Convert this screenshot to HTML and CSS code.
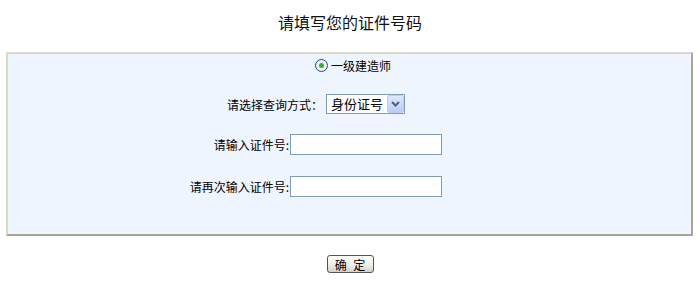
FILE: index.html
```html
<!DOCTYPE html>
<html lang="zh-CN">
<head>
<meta charset="utf-8">
<title>请填写您的证件号码</title>
<link rel="stylesheet" href="styles.css">
</head>
<body>
<div class="title">请填写您的证件号码</div>
<div class="panel">
  <div class="radio-row">
    <label class="radio-label"><input type="radio" name="kind" class="radio" checked><span>一级建造师</span></label>
  </div>
  <div class="row row-select">
    <span class="label">请选择查询方式：</span>
    <span class="select-wrap">
      <select class="select"><option>身份证号</option></select>
      <span class="select-btn"><svg width="9" height="6" viewBox="0 0 9 6"><path d="M1 1 L4.5 4.5 L8 1" fill="none" stroke="#4d6185" stroke-width="2"/></svg></span>
    </span>
  </div>
  <div class="row row-input">
    <span class="label">请输入证件号:</span>
    <input type="text" class="text">
  </div>
  <div class="row row-input row-last">
    <span class="label">请再次输入证件号:</span>
    <input type="text" class="text">
  </div>
</div>
<div class="actions">
  <button class="btn" type="button">确 定</button>
</div>
</body>
</html>
```
FILE: styles.css
```css
html, body {
  margin: 0;
  padding: 0;
  background: #ffffff;
  font-family: "Noto Sans CJK SC", "Liberation Sans", sans-serif;
  font-size: 12px;
  color: #000;
}
.title {
  height: 52px;
  line-height: 44px;
  text-align: center;
  font-size: 16px;
  color: #111;
}
.panel {
  margin: 0 7px 0 6px;
  background: #eef5fe;
  border-style: solid;
  border-width: 2px;
  border-color: #dcd8c8 #a8a78f #a8a78f #dcd8c8;
  padding-bottom: 38px;
}
.radio-row {
  height: 22px;
  display: flex;
  align-items: center;
  padding-left: 307px;
}
.radio-label {
  display: flex;
  align-items: center;
  gap: 3px;
}
.radio {
  appearance: none;
  -webkit-appearance: none;
  margin: 0;
  width: 13px;
  height: 13px;
  border: 1px solid #1d5281;
  border-radius: 50%;
  background: radial-gradient(circle at 50% 50%, #ffffff 0, #e4e4dd 100%);
  position: relative;
  box-sizing: border-box;
}
.radio:checked::after {
  content: "";
  position: absolute;
  left: 3px;
  top: 3px;
  width: 5px;
  height: 5px;
  border-radius: 50%;
  background: #3fa73c;
}
.row {
  display: grid;
  align-items: center;
  height: 20px;
}
.row-select {
  margin-top: 18px;
  grid-template-columns: 315px auto;
  column-gap: 3px;
}
.row-input {
  margin-top: 20px;
  grid-template-columns: 281px auto;
  column-gap: 1px;
}
.row-last {
  margin-top: 22px;
}
.label {
  text-align: right;
  white-space: nowrap;
}
.select-wrap {
  position: relative;
  display: inline-block;
  width: 79px;
  height: 20px;
}
.select {
  appearance: none;
  -webkit-appearance: none;
  width: 79px;
  height: 20px;
  box-sizing: border-box;
  border: 1px solid #7f9db9;
  background: #fff;
  font-family: "Noto Sans CJK SC", sans-serif;
  font-size: 13px;
  padding: 0 0 0 4px;
  line-height: 18px;
  color: #000;
  border-radius: 0;
}
.select-btn {
  position: absolute;
  right: 1px;
  top: 1px;
  width: 17px;
  height: 18px;
  box-sizing: border-box;
  border: 1px solid #b8cdf8;
  border-radius: 2px;
  background: linear-gradient(#dde8fe, #b9cdf7);
  display: flex;
  align-items: center;
  justify-content: center;
}
.text {
  width: 152px;
  height: 21px;
  box-sizing: border-box;
  border: 1px solid #7f9db9;
  background: #fff;
  margin: 0;
  padding: 0 2px;
}
.actions {
  margin-top: 19px;
  display: flex;
  justify-content: center;
}
.btn {
  width: 47px;
  height: 18px;
  padding: 0;
  box-sizing: border-box;
  border: 1px solid #555;
  border-radius: 3px;
  background: linear-gradient(#ffffff 0%, #ecebe6 60%, #d6d0c5 100%);
  font-family: "Noto Sans CJK SC", sans-serif;
  font-size: 12px;
  line-height: 15px;
  color: #000;
  letter-spacing: 2px;
  text-indent: 2px;
}
```
